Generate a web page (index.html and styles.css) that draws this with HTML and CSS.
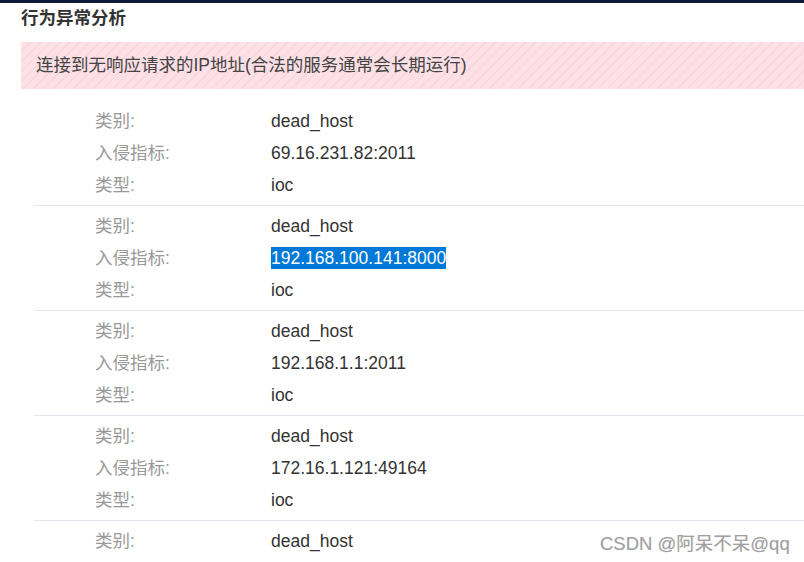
FILE: index.html
```html
<!DOCTYPE html>
<html lang="zh-CN">
<head>
  <meta charset="UTF-8" />
  <title>行为异常分析</title>
  <link rel="stylesheet" href="styles.css">
</head>
<body>
  <div class="topbar"></div>

  <section class="panel">
    <h3 class="panel-title">行为异常分析</h3>
    <div class="alert">连接到无响应请求的IP地址(合法的服务通常会长期运行)</div>

    <div class="group">
      <div class="row"><span class="label">类别:</span><span class="value">dead_host</span></div>
      <div class="row"><span class="label">入侵指标:</span><span class="value">69.16.231.82:2011</span></div>
      <div class="row"><span class="label">类型:</span><span class="value">ioc</span></div>
    </div>
    <div class="group">
      <div class="row"><span class="label">类别:</span><span class="value">dead_host</span></div>
      <div class="row"><span class="label">入侵指标:</span><span class="value"><span class="selected">192.168.100.141:8000</span></span></div>
      <div class="row"><span class="label">类型:</span><span class="value">ioc</span></div>
    </div>
    <div class="group">
      <div class="row"><span class="label">类别:</span><span class="value">dead_host</span></div>
      <div class="row"><span class="label">入侵指标:</span><span class="value">192.168.1.1:2011</span></div>
      <div class="row"><span class="label">类型:</span><span class="value">ioc</span></div>
    </div>
    <div class="group">
      <div class="row"><span class="label">类别:</span><span class="value">dead_host</span></div>
      <div class="row"><span class="label">入侵指标:</span><span class="value">172.16.1.121:49164</span></div>
      <div class="row"><span class="label">类型:</span><span class="value">ioc</span></div>
    </div>
    <div class="group">
      <div class="row"><span class="label">类别:</span><span class="value">dead_host</span></div>
    </div>
  </section>

  <div class="watermark">CSDN @阿呆不呆@qq</div>
</body>
</html>
```

FILE: styles.css
```css
* {
  box-sizing: border-box;
  margin: 0;
  padding: 0;
}

body {
  font-family: "Liberation Sans", "Noto Sans CJK SC", sans-serif;
  font-size: 17.5px;
  color: #333;
  background: #fff;
  overflow: hidden;
  height: 562px;
}

.topbar {
  height: 3px;
  background: #0c1b3c;
}

.panel {
  padding-left: 21px;
}

.panel-title {
  font-size: 17.5px;
  font-weight: 700;
  line-height: 24px;
  height: 39px;
  padding-top: 3px;
  color: #333;
}

/* striped pink notice */
.alert {
  height: 47px;
  line-height: 47px;
  padding-left: 15px;
  color: #444;
  background-color: #fde1e7;
  background-image: repeating-linear-gradient(
    -45deg,
    #fde1e7 0,
    #fde1e7 5px,
    #f8d9e0 5px,
    #f8d9e0 7px
  );
  margin-bottom: 12px;
}

.group {
  margin-left: 13px;
  padding: 4px 0 4px 61px;
  border-bottom: 1px solid #e6e6ee;
}
.group:last-child {
  border-bottom: none;
}

.row {
  display: flex;
  height: 32px;
  line-height: 32px;
}

.label {
  width: 176px;
  color: #999;
}

.value {
  color: #333;
}

.selected {
  background: #0078d7;
  color: #fff;
  padding: 1px 0;
}

.watermark {
  position: absolute;
  left: 600px;
  top: 529px;
  font-size: 18.5px;
  color: #a0a0a0;
  text-shadow: 0 0 1px #ddd;
}
```
